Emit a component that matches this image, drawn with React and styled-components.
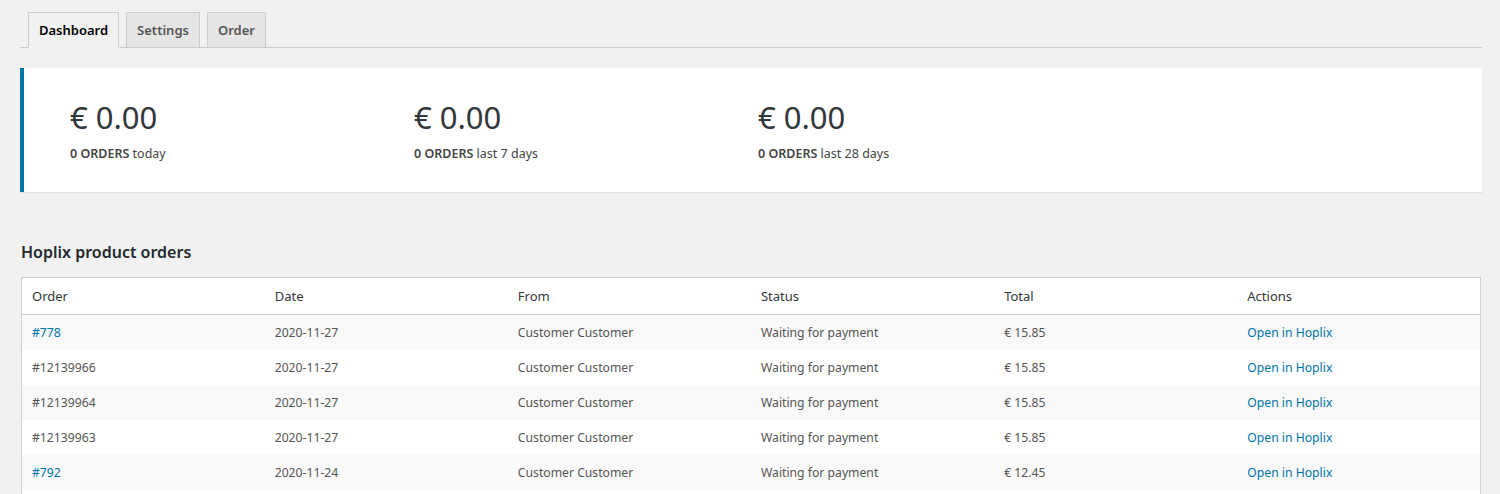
import React from "react";
import styled, { createGlobalStyle } from "styled-components";

const GlobalStyle = createGlobalStyle`
    html, body {
        margin: 0;
        padding: 0;
        background: #f1f1f1;
        font-family: "Noto Sans", "Open Sans", sans-serif;
        color: #444;
    }
`;

const stats = [
    { amount: "€ 0.00", label: "today" },
    { amount: "€ 0.00", label: "last 7 days" },
    { amount: "€ 0.00", label: "last 28 days" },
];

const orders = [
    { id: "#778", link: true, date: "2020-11-27", total: "€ 15.85" },
    { id: "#12139966", link: false, date: "2020-11-27", total: "€ 15.85" },
    { id: "#12139964", link: false, date: "2020-11-27", total: "€ 15.85" },
    { id: "#12139963", link: false, date: "2020-11-27", total: "€ 15.85" },
    { id: "#792", link: true, date: "2020-11-24", total: "€ 12.45" },
];

const App = () => {
    return (
        <>
            <GlobalStyle />
            <Wrap>
                <TabBar>
                    <Tab active>Dashboard</Tab>
                    <Tab>Settings</Tab>
                    <Tab>Order</Tab>
                </TabBar>
                <StatsBox>
                    {stats.map((s, i) => (
                        <Stat key={i}>
                            <Amount>{s.amount}</Amount>
                            <StatLabel>
                                <strong>0 ORDERS</strong> {s.label}
                            </StatLabel>
                        </Stat>
                    ))}
                </StatsBox>
                <Heading>Hoplix product orders</Heading>
                <Table>
                    <thead>
                        <tr>
                            <Th>Order</Th>
                            <Th>Date</Th>
                            <Th>From</Th>
                            <Th>Status</Th>
                            <Th>Total</Th>
                            <Th>Actions</Th>
                        </tr>
                    </thead>
                    <tbody>
                        {orders.map((o, i) => (
                            <Row key={i}>
                                <Td>{o.link ? <Link href="#">{o.id}</Link> : o.id}</Td>
                                <Td>{o.date}</Td>
                                <Td>Customer Customer</Td>
                                <Td>Waiting for payment</Td>
                                <Td>{o.total}</Td>
                                <Td>
                                    <Link href="#">Open in Hoplix</Link>
                                </Td>
                            </Row>
                        ))}
                        <Row>
                            <Td colSpan={6} />
                        </Row>
                    </tbody>
                </Table>
            </Wrap>
        </>
    );
};

const Wrap = styled.div`
    padding: 12px 18px 0 20px;
`;

const TabBar = styled.div`
    display: flex;
    gap: 7px;
    padding-left: 8px;
    border-bottom: 1px solid #ccc;
    margin-bottom: 20px;
`;

const Tab = styled.div`
    box-sizing: border-box;
    padding: 0 10px;
    display: flex;
    align-items: center;
    font-size: 13px;
    font-weight: 600;
    border: 1px solid #ccc;
    margin-bottom: -1px;
    background: ${(props) => (props.active ? "#f1f1f1" : "#e5e5e5")};
    color: ${(props) => (props.active ? "#000" : "#555")};
    height: 36px;
    border-bottom: ${(props) => (props.active ? "1px solid #f1f1f1" : "1px solid #ccc")};
`;

const StatsBox = styled.div`
    background: #fff;
    border-left: 4px solid #0073aa;
    box-shadow: 0 1px 1px rgba(0, 0, 0, 0.08);
    height: 124px;
    box-sizing: border-box;
    padding: 29px 0 0 46px;
    display: grid;
    grid-template-columns: repeat(3, 344px);
`;

const Stat = styled.div``;

const Amount = styled.div`
    font-size: 31px;
    line-height: 40px;
    color: #32373c;
`;

const StatLabel = styled.div`
    margin-top: 8px;
    font-size: 12.5px;
    color: #444;
    strong {
        font-weight: 600;
    }
`;

const Heading = styled.h2`
    margin: 49px 0 14px 1px;
    font-size: 16px;
    font-weight: 600;
    color: #23282d;
`;

const Table = styled.table`
    width: 1460px;
    margin-left: 1px;
    border-collapse: collapse;
    table-layout: fixed;
    background: #fff;
    border: 1px solid #ccd0d4;
`;

const Th = styled.th`
    text-align: left;
    font-weight: 400;
    font-size: 13px;
    color: #32373c;
    height: 36px;
    padding: 0 10px;
    border-bottom: 1px solid #ccd0d4;
`;

const Row = styled.tr`
    &:nth-child(odd) {
        background: #f9f9f9;
    }
`;

const Td = styled.td`
    font-size: 12.2px;
    color: #555;
    height: 35px;
    padding: 0 10px;
`;

const Link = styled.a`
    color: #0073aa;
    text-decoration: none;
`;

export default App;
